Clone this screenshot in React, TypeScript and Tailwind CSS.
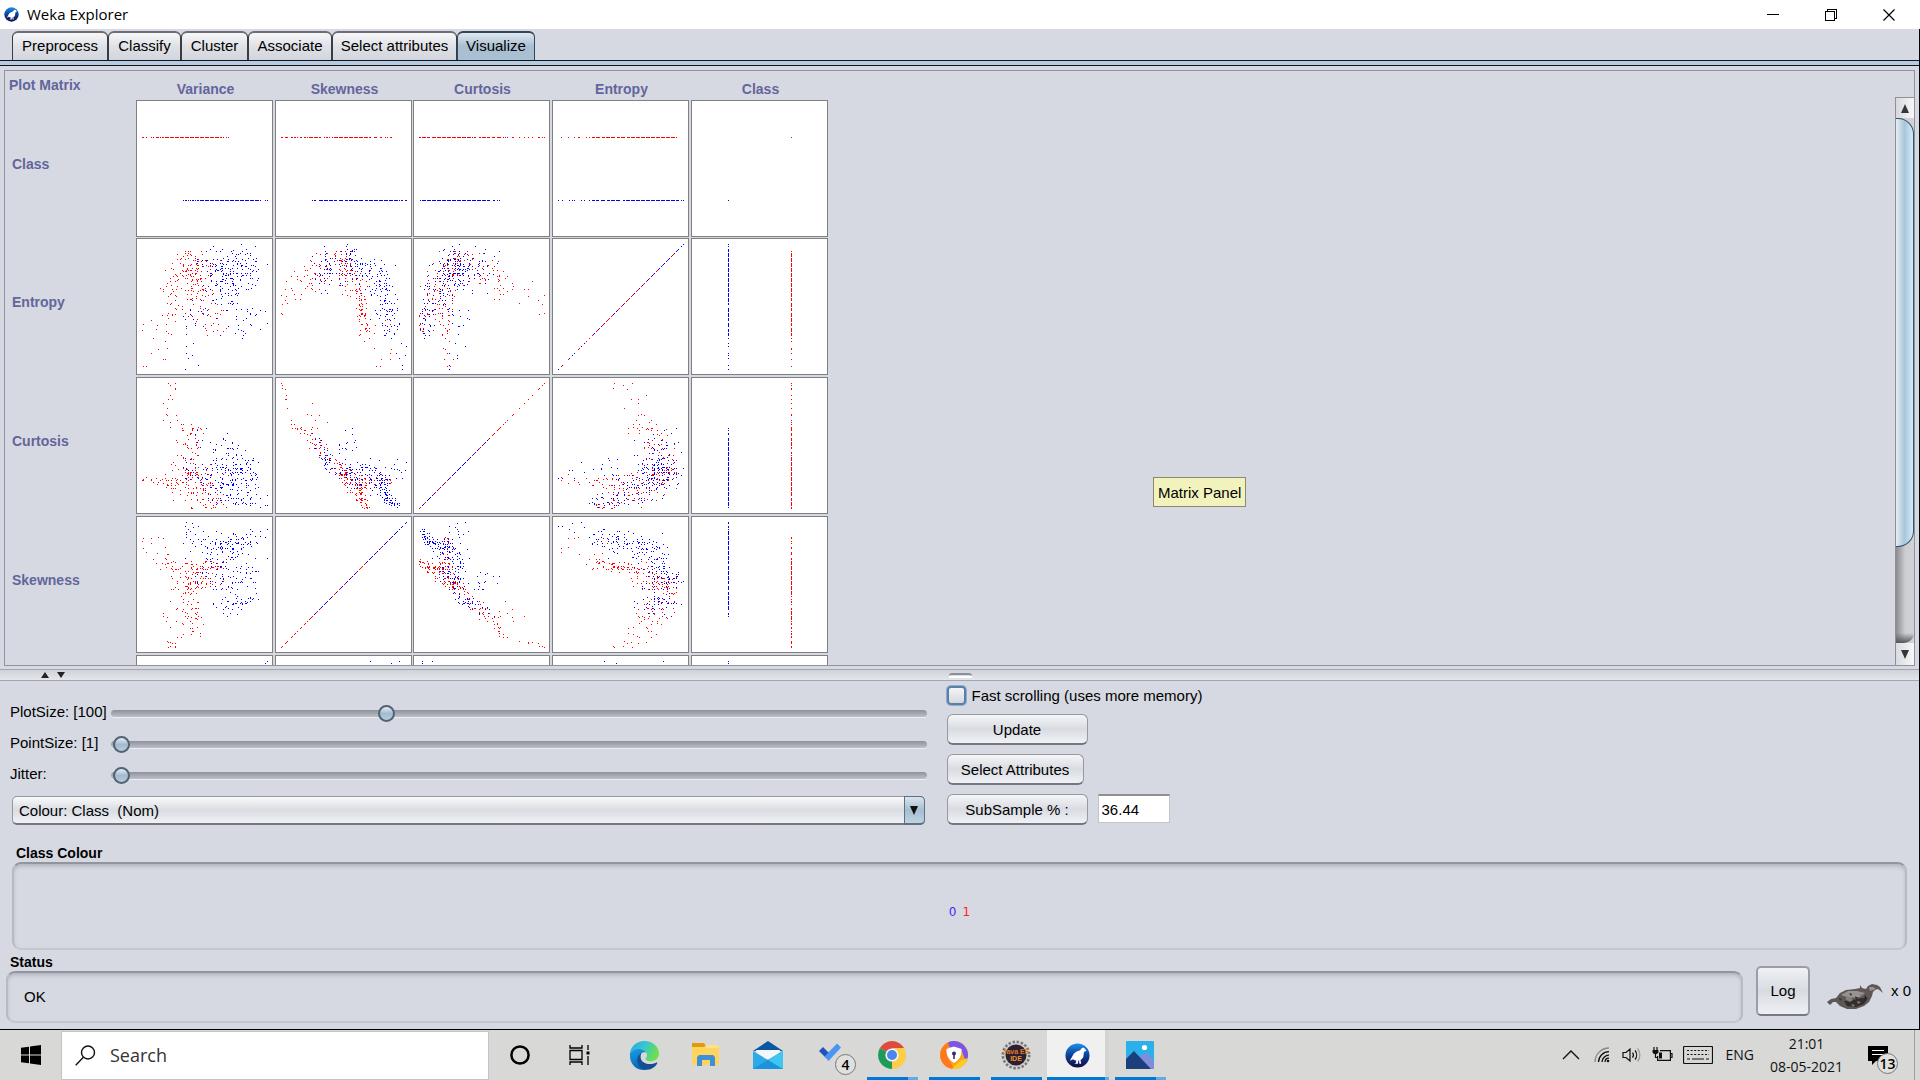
import React from "react";

/* ---------- sample data for the plot matrix ---------- */

type Point = { Variance: number; Skewness: number; Curtosis: number; Entropy: number; cls: 0 | 1 };
type Axis = "Variance" | "Skewness" | "Curtosis" | "Entropy" | "Class";

// variance, skewness, curtosis, entropy, count, spread of variance, skewness, curtosis, entropy
type Cluster = [number, number, number, number, number, number, number, number, number];

const RED: Cluster[] = [
  [0.24, 0.02, 0.94, 0.48, 4, 0.03, 0.02, 0.05, 0.06],
  [0.23, 0.05, 0.82, 0.62, 3, 0.03, 0.02, 0.04, 0.06],
  [0.2, 0.3, 0.72, 0.66, 6, 0.05, 0.05, 0.04, 0.06],
  [0.34, 0.15, 0.63, 0.68, 16, 0.05, 0.04, 0.03, 0.07],
  [0.38, 0.26, 0.56, 0.78, 18, 0.06, 0.04, 0.06, 0.06],
  [0.4, 0.3, 0.48, 0.84, 14, 0.05, 0.04, 0.04, 0.07],
  [0.35, 0.47, 0.32, 0.84, 22, 0.06, 0.05, 0.04, 0.07],
  [0.42, 0.5, 0.27, 0.83, 20, 0.07, 0.04, 0.05, 0.07],
  [0.5, 0.52, 0.24, 0.8, 18, 0.08, 0.03, 0.06, 0.07],
  [0.36, 0.57, 0.2, 0.7, 18, 0.1, 0.04, 0.05, 0.08],
  [0.46, 0.6, 0.15, 0.66, 16, 0.09, 0.03, 0.05, 0.07],
  [0.4, 0.63, 0.2, 0.54, 15, 0.1, 0.02, 0.06, 0.08],
  [0.5, 0.63, 0.1, 0.5, 16, 0.07, 0.02, 0.04, 0.07],
  [0.56, 0.65, 0.07, 0.38, 13, 0.07, 0.015, 0.05, 0.04],
  [0.6, 0.69, 0.01, 0.33, 7, 0.06, 0.01, 0.01, 0.02],
  [0.25, 0.65, 0.22, 0.4, 14, 0.05, 0.03, 0.03, 0.1],
  [0.19, 0.71, 0.22, 0.24, 7, 0.04, 0.03, 0.02, 0.07],
  [0.09, 0.8, 0.23, 0.25, 8, 0.04, 0.05, 0.02, 0.17],
];

const BLUE: Cluster[] = [
  [0.66, 0.28, 0.56, 0.72, 5, 0.04, 0.02, 0.02, 0.08],
  [0.68, 0.35, 0.42, 0.76, 14, 0.08, 0.03, 0.05, 0.07],
  [0.77, 0.38, 0.36, 0.8, 20, 0.08, 0.04, 0.05, 0.07],
  [0.82, 0.41, 0.32, 0.84, 12, 0.04, 0.04, 0.04, 0.07],
  [0.66, 0.51, 0.45, 0.8, 12, 0.05, 0.03, 0.05, 0.05],
  [0.48, 0.56, 0.55, 0.85, 7, 0.07, 0.04, 0.04, 0.07],
  [0.77, 0.54, 0.27, 0.93, 13, 0.06, 0.03, 0.05, 0.05],
  [0.66, 0.56, 0.28, 0.82, 18, 0.1, 0.05, 0.06, 0.07],
  [0.85, 0.61, 0.22, 0.81, 16, 0.07, 0.04, 0.06, 0.07],
  [0.6, 0.66, 0.3, 0.77, 14, 0.08, 0.04, 0.05, 0.05],
  [0.62, 0.74, 0.25, 0.75, 20, 0.09, 0.05, 0.05, 0.05],
  [0.68, 0.79, 0.22, 0.71, 18, 0.09, 0.04, 0.06, 0.06],
  [0.6, 0.83, 0.15, 0.64, 18, 0.08, 0.04, 0.05, 0.06],
  [0.78, 0.79, 0.13, 0.68, 17, 0.08, 0.05, 0.05, 0.06],
  [0.5, 0.82, 0.24, 0.47, 14, 0.07, 0.05, 0.06, 0.08],
  [0.62, 0.81, 0.16, 0.52, 10, 0.06, 0.04, 0.05, 0.06],
  [0.79, 0.88, 0.05, 0.37, 24, 0.07, 0.03, 0.03, 0.06],
  [0.9, 0.9, 0.05, 0.4, 7, 0.04, 0.03, 0.03, 0.05],
  [0.4, 0.93, 0.3, 0.25, 9, 0.06, 0.05, 0.04, 0.12],
];

function makeRandom(seed: number) {
  let state = seed;
  return () => {
    state = (state * 1664525 + 1013904223) >>> 0;
    return state / 4294967296;
  };
}

// reflects values that leave the unit range back into it
const fold = (n: number) => {
  const m = Math.abs(n);
  return m > 1 ? 2 - m : m;
};

function buildPoints(): Point[] {
  const random = makeRandom(2021);
  const noise = () => (random() + random() + random() + random() - 2) * 1.9;
  const points: Point[] = [];
  const add = (clusters: Cluster[], cls: 0 | 1) => {
    for (const [v, s, c, e, count, dv, ds, dc, de] of clusters) {
      for (let i = 0; i < count; i++) {
        const k = noise();
        points.push({
          Variance: fold(v + noise() * dv),
          Skewness: fold(s + k * ds),
          Curtosis: fold(c + (noise() * 0.75 - k * 0.65) * dc),
          Entropy: fold(Math.min(e + noise() * de, 0.94 + noise() * 0.03)),
          cls,
        });
      }
    }
  };
  add(RED, 1);
  add(BLUE, 0);
  for (let i = points.length - 1; i > 0; i--) {
    const j = Math.floor(random() * (i + 1));
    [points[i], points[j]] = [points[j], points[i]];
  }
  points.push(
    { Variance: 1, Skewness: 0.71, Curtosis: 0.1, Entropy: 0.84, cls: 0 },
    { Variance: 0.98, Skewness: 0.88, Curtosis: 0.02, Entropy: 0.46, cls: 0 },
    { Variance: 0.35, Skewness: 1, Curtosis: 0.37, Entropy: 0.18, cls: 0 },
    { Variance: 0.34, Skewness: 0.97, Curtosis: 0.24, Entropy: 0, cls: 0 },
    { Variance: 0.45, Skewness: 0.97, Curtosis: 0.24, Entropy: 0.03, cls: 0 },
    { Variance: 0.79, Skewness: 0.53, Curtosis: 0.32, Entropy: 1, cls: 0 },
    { Variance: 0, Skewness: 0.85, Curtosis: 0.22, Entropy: 0.31, cls: 1 },
    { Variance: 0.03, Skewness: 0.76, Curtosis: 0.25, Entropy: 0.02, cls: 1 },
    { Variance: 0.26, Skewness: 0, Curtosis: 1, Entropy: 0.59, cls: 1 },
    { Variance: 0.22, Skewness: 0.04, Curtosis: 0.9, Entropy: 0.7, cls: 1 },
  );
  return points;
}

const POINTS = buildPoints();
const COLUMNS: Axis[] = ["Variance", "Skewness", "Curtosis", "Entropy", "Class"];
const ROWS: Axis[] = ["Class", "Entropy", "Curtosis", "Skewness", "Variance"];

// values fall on a 100 step grid that the display enlarges to 125 pixels
function position(p: Point, axis: Axis) {
  if (axis === "Class") return p.cls ? 94 : 31;
  return Math.round(Math.round(p[axis] * 100) * 1.25);
}

function Plot({ x, y }: { x: Axis; y: Axis }) {
  const pixels = new Map<string, 0 | 1>();
  for (const p of POINTS) pixels.set(`${6 + position(p, x)} ${131 - position(p, y)}`, p.cls);
  let red = "";
  let blue = "";
  pixels.forEach((cls, at) => {
    const d = `M${at}h1v1h-1z`;
    if (cls) red += d;
    else blue += d;
  });
  return (
    <svg
      width="137"
      height="137"
      viewBox="0 0 137 137"
      shapeRendering="crispEdges"
      role="img"
      aria-label={`${y} against ${x}`}
      className="block"
    >
      <rect width="137" height="137" fill="#808080" />
      <rect x="1" y="1" width="135" height="135" fill="#fff" />
      <path d={red} fill="#f00" />
      <path d={blue} fill="#00f" />
    </svg>
  );
}

/* ---------- Weka window ---------- */

function WekaLogo({ size }: { size: number }) {
  return (
    <svg width={size} height={size} viewBox="0 0 26 26" aria-hidden="true">
      <defs>
        <linearGradient id={`weka${size}`} x1="0" y1="0" x2="0" y2="1">
          <stop offset="0" stopColor="#1e90e8" />
          <stop offset="0.45" stopColor="#0b46a0" />
          <stop offset="1" stopColor="#120a45" />
        </linearGradient>
      </defs>
      <circle cx="13" cy="13" r="12.5" fill={`url(#weka${size})`} />
      <path
        d="M22.500 8l-2.300-2.600c-1.200-.9-2.800-.5-3.400.8-.3.700-.8 1.200-1.600 1.500-3.600.8-6.200 2.600-7.400 5.800L5 18.500l3.400-1.700c1 .9 2.200 1.400 3.400 1.500l-.5 2.200-1.500 1h3.600l.5-3.200h.8l.2 3.200h2l-.8-3.700c2.200-1.200 3.400-3.200 3.300-5.800-.1-1.200.2-2.200.9-3.200z"
        fill="#fff"
      />
    </svg>
  );
}

function TitleBar() {
  return (
    <header className="flex h-[29px] shrink-0 items-center bg-white pl-1">
      <WekaLogo size={15} />
      <h1 className="pb-0.5 pl-2 font-['Open_Sans',sans-serif] text-[15px] leading-5 text-black">Weka Explorer</h1>
      <div className="ml-auto flex">
        <button aria-label="Minimize" className="flex h-[29px] w-[58px] items-center justify-center">
          <svg width="12" height="12" viewBox="0 0 12 12" shapeRendering="crispEdges">
            <path d="M0 5.500h12" stroke="#000" />
          </svg>
        </button>
        <button aria-label="Restore" className="flex h-[29px] w-[58px] items-center justify-center">
          <svg width="12" height="12" viewBox="0 0 12 12" shapeRendering="crispEdges" fill="none" stroke="#000">
            <path d="M.5 2.500h9v9h-9zM2.500 2.500v-2h9v9h-2" />
          </svg>
        </button>
        <button aria-label="Close" className="flex h-[29px] w-[60px] items-center justify-center pr-0.5">
          <svg width="12" height="12" viewBox="0 0 12 12" stroke="#000" strokeWidth="1.200">
            <path d="M.5.5l11 11M11.500.5l-11 11" />
          </svg>
        </button>
      </div>
    </header>
  );
}

const TABS = [
  ["Preprocess", "w-[96px]"],
  ["Classify", "w-[73px]"],
  ["Cluster", "w-[67px]"],
  ["Associate", "w-[84px]"],
  ["Select attributes", "w-[125px]"],
  ["Visualize", "w-[78px]"],
];

function Tabs() {
  return (
    <div className="shrink-0 border-r border-black">
      <div role="tablist" className="flex h-[31px] items-end pl-3">
        {TABS.map(([name, width]) => {
          const active = name === "Visualize";
          return (
            <button
              key={name}
              role="tab"
              aria-selected={active}
              className={`${width} h-[29px] whitespace-nowrap rounded-t-[6px] border-x border-t-2 pb-0.5 text-center text-[15px] leading-5 ${
                active
                  ? "border-[#31485c] bg-gradient-to-b from-[#dfe8ef] via-[#a9bfd2] to-[#a9bfd2]"
                  : "border-x-[#3a3c44] border-t-[#6c6e74] bg-gradient-to-b from-[#f7f7f9] via-[#dfe1e6] to-[#d2d5dc]"
              }`}
            >
              {name}
            </button>
          );
        })}
      </div>
      <div className="h-[6px] border-y border-[#10151f] bg-[#b7cbe0]" />
    </div>
  );
}

function ScrollBar() {
  return (
    <div className="mt-[26px] flex w-[19px] shrink-0 flex-col border-l border-t border-[#8f9198] bg-[#cfd0d4]">
      <button aria-label="Scroll up" className="flex h-[20px] items-center justify-center bg-gradient-to-r from-[#d6d8dc] to-[#f8f8f9]">
        <svg width="8" height="9" viewBox="0 0 8 9">
          <path d="M4 0l4 9H0z" fill="#33363a" />
        </svg>
      </button>
      <div className="flex flex-1 flex-col bg-gradient-to-r from-[#8a8b8f] via-[#cccdd1] to-[#d2d3d7]">
        <div className="h-[429px] rounded-r-[16px] border border-l-0 border-[#37506a] bg-gradient-to-r from-[#e6edf2] via-[#a9c6da] to-[#d3ecfa]" />
        <div className="mt-auto h-[10px] rounded-br-[14px] bg-gradient-to-b from-transparent to-[#55565a]" />
      </div>
      <button aria-label="Scroll down" className="flex h-[22px] items-center justify-center bg-gradient-to-r from-[#d9dbdf] to-[#f8f8f9]">
        <svg width="8" height="9" viewBox="0 0 8 9">
          <path d="M4 9L0 0h8z" fill="#33363a" />
        </svg>
      </button>
    </div>
  );
}

function PlotMatrix() {
  return (
    <section className="relative mx-1 mt-1 flex min-h-0 flex-1 overflow-hidden border border-[#8f93a0] text-[14px] font-bold text-[#63659c]">
      <div className="min-h-0 flex-1 overflow-hidden">
        <div className="grid grid-cols-[131px_139px_138px_139px_139px_137px]">
          <h2 className="h-[29px] pl-1 pt-1 leading-5">Plot Matrix</h2>
          {COLUMNS.map((name) => (
            <div key={name} className="h-[29px] w-[139px] pt-2 text-center leading-5">
              {name}
            </div>
          ))}
          {ROWS.map((row, r) => (
            <React.Fragment key={row}>
              <div className="flex h-[128px] items-center pl-[7px] leading-5">{row === "Variance" ? null : row}</div>
              {COLUMNS.map((column) => (
                <div key={column} className={r === 0 ? "h-[138px]" : "h-[139px]"}>
                  <Plot x={column} y={row} />
                </div>
              ))}
            </React.Fragment>
          ))}
        </div>
      </div>
      <ScrollBar />
      <div
        role="tooltip"
        className="absolute left-[1148px] top-[406px] border border-[#8a8a70] bg-[#f2f2bd] px-1 pb-1 pt-[6px] text-[15px] font-normal leading-[18px] text-black"
      >
        Matrix Panel
      </div>
    </section>
  );
}

function Splitter() {
  return (
    <div className="mt-[3px] flex h-[12px] shrink-0 items-center border-y border-[#a3a6ae] bg-gradient-to-b from-[#cfd2d9] via-[#d9dce2] to-[#e4e6ea]">
      <button aria-label="Collapse up" className="ml-[41px] w-2">
        <svg width="8" height="6" viewBox="0 0 8 6" className="block">
          <path d="M4 0l4 6H0z" fill="#222" />
        </svg>
      </button>
      <button aria-label="Collapse down" className="ml-2 w-2">
        <svg width="8" height="6" viewBox="0 0 8 6" className="block">
          <path d="M4 6L0 0h8z" fill="#222" />
        </svg>
      </button>
      <div className="ml-auto mr-auto flex w-full justify-center pr-[64px]">
        <div className="h-[5px] w-[23px] rounded-t-[3px] border-b-2 border-t-2 border-b-white border-t-[#8d9099]" />
      </div>
    </div>
  );
}

function Slider({ label, id, value }: { label: string; id: string; value: number }) {
  return (
    <div className="flex h-[31px] items-center">
      <label htmlFor={id} className="w-[101px] whitespace-nowrap pb-1 leading-5">
        {label}
      </label>
      <input
        id={id}
        type="range"
        min={0}
        max={1000}
        defaultValue={value}
        className="h-[17px] min-w-0 flex-1 appearance-none bg-transparent [&::-webkit-slider-runnable-track]:h-[7px] [&::-webkit-slider-runnable-track]:rounded-full [&::-webkit-slider-runnable-track]:bg-gradient-to-b [&::-webkit-slider-runnable-track]:from-[#8e9199] [&::-webkit-slider-runnable-track]:to-[#bcc0c9] [&::-webkit-slider-runnable-track]:shadow-[0_1px_0_#eceef2] [&::-webkit-slider-thumb]:-mt-[5px] [&::-webkit-slider-thumb]:size-[17px] [&::-webkit-slider-thumb]:appearance-none [&::-webkit-slider-thumb]:rounded-full [&::-webkit-slider-thumb]:border-2 [&::-webkit-slider-thumb]:border-[#4f6375] [&::-webkit-slider-thumb]:bg-gradient-to-b [&::-webkit-slider-thumb]:from-[#e6edf3] [&::-webkit-slider-thumb]:via-[#a3bbcf] [&::-webkit-slider-thumb]:to-[#b5cbdc]"
      />
    </div>
  );
}

function PushButton({ children, width }: { children: React.ReactNode; width: string }) {
  return (
    <button
      className={`${width} h-[31px] rounded-[6px] border border-b-2 border-[#96999f] border-b-[#74777e] bg-gradient-to-b from-[#f5f6f8] via-[#d8dbe1] to-[#f0f2f6] pt-px text-center leading-5`}
    >
      {children}
    </button>
  );
}

function Controls() {
  return (
    <section className="grid shrink-0 grid-cols-[73fr_75fr] pt-[5px]">
      <div className="pl-[10px] pr-5 pt-3">
        <Slider id="plot-size" label="PlotSize: [100]" value={334} />
        <Slider id="point-size" label="PointSize: [1]" value={3} />
        <Slider id="jitter" label="Jitter:" value={3} />
        <div className="relative mx-0.5 mt-[5px]">
          <select
            aria-label="Colour"
            className="block h-[29px] w-full appearance-none rounded-[5px] border border-b-2 border-[#96999f] border-b-[#74777e] bg-gradient-to-b from-[#fafafb] via-[#d9dce2] to-[#f0f2f6] pl-[6px] pt-px leading-5"
          >
            <option>Colour: Class{"\u00a0\u00a0"}(Nom)</option>
          </select>
          <span className="pointer-events-none absolute inset-y-0 right-0 flex w-[21px] items-center justify-center rounded-r-[5px] border border-b-2 border-[#5a7186] bg-gradient-to-b from-[#dbe5ed] via-[#a6bdd0] to-[#bfd3e2]">
            <svg width="8" height="9" viewBox="0 0 8 9">
              <path d="M4 9L0 0h8z" fill="#111" />
            </svg>
          </span>
        </div>
      </div>
      <div className="flex flex-col items-start">
        <div className="flex h-[19px] items-center">
          <input
            id="fast"
            type="checkbox"
            className="size-[19px] appearance-none rounded-[4px] border-2 border-[#5d7fa5] bg-gradient-to-b from-[#f4f5f7] to-[#d5d8de] shadow-[0_0_0_1px_#86b0da]"
          />
          <label htmlFor="fast" className="pl-[6px] leading-5">
            Fast scrolling (uses more memory)
          </label>
        </div>
        <div className="mt-[9px] flex flex-col items-start gap-[9px]">
          <PushButton width="w-[141px]">Update</PushButton>
          <PushButton width="w-[137px]">Select Attributes</PushButton>
          <div className="flex gap-[10px]">
            <PushButton width="w-[141px]">SubSample % :</PushButton>
            <input
              aria-label="SubSample percentage"
              defaultValue="36.44"
              className="h-[29px] w-[72px] border border-t-2 border-[#c2c4ca] border-t-[#8e9096] bg-white pl-[3px] leading-5"
            />
          </div>
        </div>
      </div>
    </section>
  );
}

function Taskbird() {
  return (
    <svg width="56" height="28" viewBox="0 0 56 28" aria-hidden="true">
      <path
        d="M0 18l4-3 5-1 4-5 6-3 9-1 5-1 0-3 2 3 4 1 2-3 4-2 5 1 3 2 3 6-5-4-3 1-2 2-1 4-3 6-5 4-8 3-9 0-7-3-4-4-3 0-3 3z"
        fill="#5d5856"
      />
      <path d="M14 11l7-4 9 0 8 2-5 4-11 1zM42 3l4 0 3 2-6 2z" fill="#989290" />
      <path d="M17 17l9-1 8-2 7 0-4 6-8 3-9-1zM12 14l3 1-2 2z" fill="#332e2e" />
      <path d="M19 12l4 1 3 3-3 2-4-2zM30 17l4 1-3 2zM24 20l4 1-2 2zM33 9l3 2-3 2z" fill="#857e7b" />
      <path d="M22 9l3 1-1 2zM28 12l3 2-2 1zM38 11l2 3-3 2z" fill="#2b2626" />
    </svg>
  );
}

const INSET =
  "rounded-[9px] border-2 border-[#b7bac1] border-t-[#92959c] border-b-[#c4c7cd] shadow-[inset_0_3px_4px_-1px_#aeb1b8]";

function ClassColour() {
  return (
    <section className="shrink-0 px-3 pt-[19px]">
      <h2 className="pl-1 text-[14px] font-bold leading-[18px]">Class Colour</h2>
      <div
        className={`flex h-[88px] items-center justify-center gap-[6px] pt-3 font-['DejaVu_Sans',sans-serif] text-[12px] leading-4 ${INSET}`}
      >
        <button className="text-[#3a2bff]">0</button>
        <button className="text-[#ff2020]">1</button>
      </div>
    </section>
  );
}

function Status() {
  return (
    <section className="flex shrink-0 pb-[6px] pl-[6px] pr-2 pt-[3px]">
      <div className="min-w-0 flex-1">
        <h2 className="pl-1 text-[14px] font-bold leading-[18px]">Status</h2>
        <output className={`flex h-[52px] items-center pl-4 leading-5 ${INSET}`}>OK</output>
      </div>
      <div className="flex items-center pl-[13px] pt-[5px]">
        <button className="h-[50px] w-[54px] rounded-[5px] border-2 border-[#9b9ea5] border-b-[#777a81] bg-gradient-to-b from-[#eff1f4] via-[#d8dbe1] to-[#eef0f5] leading-5">
          Log
        </button>
        <div className="pl-[17px] pt-[14px]">
          <Taskbird />
        </div>
        <span className="whitespace-nowrap pl-2 leading-5">x 0</span>
      </div>
    </section>
  );
}

/* ---------- taskbar icons ---------- */

function EdgeIcon() {
  return (
    <svg width="31" height="31" viewBox="0 0 32 32">
      <defs>
        <linearGradient id="edgeTop" x1="0" y1="0" x2="1" y2="0.4">
          <stop offset="0" stopColor="#27a4e8" />
          <stop offset="0.5" stopColor="#34c6d4" />
          <stop offset="1" stopColor="#6be04e" />
        </linearGradient>
        <linearGradient id="edgeLeft" x1="0" y1="0" x2="0.4" y2="1">
          <stop offset="0" stopColor="#1ba0e2" />
          <stop offset="1" stopColor="#0a63b8" />
        </linearGradient>
      </defs>
      <path d="M1 14C2 6 8 1 16 1c9 0 15 6.500 15 13 0 5-4 8-8.500 8-4 0-5.500-1.600-5.500-2.400 0-.8 1.600-1.400 1.600-4.100 0-3-3-5.700-6.600-5.700C7 9.800 3 11 1 14z" fill="url(#edgeTop)" />
      <path d="M1 14c2-3.500 6-5.200 10.500-4.700 2.500.3 5 1.700 6.300 3.700-3-1.500-7.800 1-7.800 7 0 6 4.500 10.500 9 10.700C8.500 33 0 25 1 14z" fill="url(#edgeLeft)" />
      <path d="M13 13.500c-4 2-5.600 7-3.600 11.500 1.600 3.700 5.500 6 9.600 5.700 4.500-.5 8-3 10-6.300.5-.9-.3-1.400-1-1-7 3.400-15.600.5-16-5.400-.1-1.900.4-3.400 1-4.500z" fill="#124f94" />
    </svg>
  );
}

function FolderIcon() {
  return (
    <svg width="28" height="26" viewBox="0 0 28 26">
      <path d="M0 1h12l2 3v6H0z" fill="#e09a0c" />
      <path d="M0 5h12l2-2h13v20H0z" fill="#ffd45e" />
      <path d="M14 3h13v3H14z" fill="#fbe08a" />
      <path d="M5 24v-9l2-2h14l2 2v9h-5v-6h-8v6z" fill="#3f8fd6" />
    </svg>
  );
}

function MailIcon() {
  return (
    <svg width="30" height="28" viewBox="0 0 30 28">
      <path d="M15 0l15 10H0z" fill="#0a56a0" />
      <path d="M3 9h24l-3 9H6z" fill="#f4f7fa" />
      <path d="M0 10l15 9 15-9v18H0z" fill="#2da9e8" />
      <path d="M30 10v18H0l15-9z" fill="#1b93da" />
      <path d="M30 10L15 19l15 9z" fill="#40c4f0" />
    </svg>
  );
}

function TodoIcon() {
  return (
    <span className="relative block h-[26px] w-[24px]">
      <svg width="24" height="20" viewBox="0 0 24 20">
        <path d="M1 9l4-4 7 7-4 4z" fill="#1d56b8" />
        <path d="M6.500 14.500L19 1.500l4 4L10.500 19z" fill="#4a94f2" />
      </svg>
      <Badge className="left-[17px] top-[12px]">4</Badge>
    </span>
  );
}

function Badge({ children, className }: { children: string; className: string }) {
  return (
    <span
      className={`absolute flex size-[21px] items-center justify-center rounded-full border border-[#777] bg-[#e0e0df] font-['Open_Sans',sans-serif] text-[14px] font-semibold leading-4 text-black ${className}`}
    >
      {children}
    </span>
  );
}

function ChromeIcon() {
  return (
    <svg width="28" height="28" viewBox="0 0 28 28">
      <path d="M14 14L1.900 7A14 14 0 0 1 26.100 7z" fill="#dd4b3e" />
      <path d="M14 14L26.100 7A14 14 0 0 1 14 28z" fill="#fccd45" />
      <path d="M14 14v14A14 14 0 0 1 1.900 7z" fill="#1e9c57" />
      <path d="M14 7h12.100A14 14 0 0 1 14 28l6-10.500z" fill="#fccd45" />
      <circle cx="14" cy="14" r="6.600" fill="#f3f3f3" />
      <circle cx="14" cy="14" r="5" fill="#4a86ee" />
    </svg>
  );
}

function SecureBrowserIcon() {
  return (
    <svg width="28" height="28" viewBox="0 0 28 28">
      <circle cx="14" cy="14" r="14" fill="#f9a61c" />
      <path d="M8 1.400A14 14 0 0 1 28 14c0 3-1 5-2 7L21 8 9 6z" fill="#7a55e8" />
      <path d="M14 28A14 14 0 0 1 8 1.400L9 18z" fill="#ff7a1e" />
      <path d="M27.500 17A14 14 0 0 1 12 28l8-8z" fill="#ffcb22" />
      <path d="M14 5.500l7.500 2.500c.4 7-2.500 11-7.500 14-5-3-7.900-7-7.500-14z" fill="#fff" />
      <circle cx="14" cy="12.500" r="2" fill="#3b2a67" />
      <path d="M13.200 12h1.600v6h-1.600z" fill="#3b2a67" />
    </svg>
  );
}

function JavaIcon() {
  return (
    <svg width="30" height="30" viewBox="0 0 30 30">
      <circle cx="15" cy="15" r="13" fill="none" stroke="#777" strokeWidth="3" strokeDasharray="2.400 1.700" />
      <circle cx="15" cy="15" r="12" fill="#c9c9c9" />
      <circle cx="15" cy="15" r="10.500" fill="#2b1f33" />
      <text x="15" y="14" textAnchor="middle" fontSize="7" fontWeight="700" fontFamily="Liberation Sans, sans-serif" fill="#e07b22">
        Java EE
      </text>
      <text x="15" y="21" textAnchor="middle" fontSize="7" fontWeight="700" fontFamily="Liberation Sans, sans-serif" fill="#e8902c">
        IDE
      </text>
    </svg>
  );
}

function PhotosIcon() {
  return (
    <svg width="28" height="28" viewBox="0 0 28 28">
      <rect width="28" height="28" rx="1" fill="#2bb0ea" />
      <path d="M14 16l6-5 8 9v8H14z" fill="#7f8ddb" />
      <path d="M0 18l8-8 17 18H0z" fill="#1b3f7d" />
      <circle cx="18.500" cy="6.500" r="2.600" fill="#fff" />
    </svg>
  );
}

function CortanaIcon() {
  return (
    <svg width="22" height="22" viewBox="0 0 22 22">
      <circle cx="11" cy="11" r="8.600" fill="none" stroke="#000" strokeWidth="2.500" />
    </svg>
  );
}

function TaskViewIcon() {
  return (
    <svg width="22" height="20" viewBox="0 0 22 20" fill="none" stroke="#000" strokeWidth="1.300" className="-ml-1">
      <path d="M1 5.500h12v9H1zM1 0v3h12V0M1 20v-3h12v3M19 0v5M19 11v9" />
      <path d="M17.500 6.500h3v3h-3z" fill="#000" stroke="none" />
    </svg>
  );
}

const APPS: { name: string; icon: React.ReactNode; bar: string }[] = [
  { name: "Cortana", icon: <CortanaIcon />, bar: "" },
  { name: "Task View", icon: <TaskViewIcon />, bar: "" },
  { name: "Edge", icon: <EdgeIcon />, bar: "" },
  { name: "File Explorer", icon: <FolderIcon />, bar: "" },
  { name: "Mail", icon: <MailIcon />, bar: "" },
  { name: "To Do", icon: <TodoIcon />, bar: "" },
  { name: "Chrome", icon: <ChromeIcon />, bar: "stack" },
  { name: "Secure Browser", icon: <SecureBrowserIcon />, bar: "single" },
  { name: "Eclipse", icon: <JavaIcon />, bar: "single" },
  { name: "Weka", icon: <WekaLogo size={25} />, bar: "active" },
  { name: "Photos", icon: <PhotosIcon />, bar: "stack" },
];

function AppButton({ name, icon, bar }: { name: string; icon: React.ReactNode; bar: string }) {
  const active = bar === "active";
  return (
    <button aria-label={name} className="flex h-[50px] w-[62px] flex-col items-center">
      <span className={`flex w-full flex-1 items-center justify-center pt-[3px] ${active ? "border-r-4 border-[#d2d3d3] bg-[#f0f0f0] pl-0.5" : ""}`}>
        {icon}
      </span>
      {bar && (
        <span className={`flex h-[3px] ${active ? "w-full" : "w-[51px]"}`}>
          <span className="flex-1 bg-[#0078d7]" />
          {bar !== "single" && <span className={`${active ? "w-1" : "w-[10px]"} bg-[#64abe3]`} />}
        </span>
      )}
      {!bar && <span className="h-[3px]" />}
    </button>
  );
}

function Tray() {
  return (
    <div className="ml-auto flex h-full items-center font-['Open_Sans',sans-serif] text-[14px] text-[#111]">
      <button aria-label="Show hidden icons">
        <svg width="18" height="10" viewBox="0 0 18 10" fill="none" stroke="#111" strokeWidth="1.400">
          <path d="M1 9l8-8 8 8" />
        </svg>
      </button>
      <svg width="16" height="16" viewBox="0 0 16 16" fill="none" stroke="#111" strokeWidth="1.300" className="ml-[14px]">
        <path d="M1 15A14 14 0 0 1 15 1" stroke="#888" />
        <path d="M4.500 15A10.500 10.500 0 0 1 15 4.700M8 15a7 7 0 0 1 7-6.800M11 15a4 4 0 0 1 4-3.800" />
        <circle cx="14" cy="14" r="1.300" fill="#111" stroke="none" />
      </svg>
      <svg width="20" height="16" viewBox="0 0 20 16" fill="none" stroke="#111" strokeWidth="1.200" className="ml-3">
        <path d="M1 5.500h3L8 2v12l-4-3.500H1zM10.500 5.500a4 4 0 0 1 0 5M13 3.500a7 7 0 0 1 0 9" />
        <path d="M15.500 1.500a10 10 0 0 1 0 13" stroke="#999" />
      </svg>
      <svg width="21" height="16" viewBox="0 0 21 16" fill="none" stroke="#111" strokeWidth="1.200" className="ml-[10px]">
        <path d="M8 3.600h10.400v9.800H5.600V9M18.500 6.500H20v4h-1.500M2 0v3M5 0v3M3.500 7v3.500h2" />
        <path d="M.5 3h6v2.500L5 7H2L.5 5.500zM7 5.500h3v6H7z" fill="#111" stroke="none" />
      </svg>
      <svg width="30" height="18" viewBox="0 0 30 18" fill="none" stroke="#111" className="ml-[10px]">
        <rect x=".5" y=".5" width="29" height="17" rx="1" strokeWidth="1.200" />
        <path d="M4 4.500h22M4 8.500h22" strokeDasharray="2 1.600" />
        <path d="M4 13h3M9 13h12M23 13h3" />
      </svg>
      <span className="ml-[13px] leading-5">ENG</span>
      <div className="ml-[14px] w-[77px] text-center leading-[23px]">
        <div>21:01</div>
        <div className="whitespace-nowrap">08-05-2021</div>
      </div>
      <button aria-label="Notifications, 13 new" className="relative ml-[23px] h-[22px] w-[30px]">
        <svg width="20" height="19" viewBox="0 0 20 19" className="block">
          <path d="M0 0h20v15H8l-4 4v-4H0z" fill="#000" />
          <path d="M4 4.500h12M4 8.500h12" stroke="#fff" strokeWidth="1.200" />
        </svg>
        <Badge className="left-[9px] top-[9px]">13</Badge>
      </button>
      <span className="ml-[16px] h-full w-[6px] border-l border-[#a0a0a0]" />
    </div>
  );
}

function Taskbar() {
  return (
    <footer className="flex h-[50px] shrink-0 items-center bg-[#d8d8d7]">
      <button aria-label="Start" className="flex h-full w-[61px] items-center justify-center">
        <svg width="20" height="20" viewBox="0 0 20 20">
          <path d="M0 2.800L8 1.700v7.800H0zM9 1.500L20 0v9.500H9zM0 10.500h8v7.800l-8-1.100zM9 10.500h11V20L9 18.500z" />
        </svg>
      </button>
      <label className="flex h-[49px] w-[428px] items-center border border-[#c4c4c4] bg-white pl-[13px]">
        <svg width="21" height="21" viewBox="0 0 21 21" fill="none" stroke="#111" strokeWidth="1.400">
          <circle cx="13" cy="7.500" r="6.500" />
          <path d="M8.400 12.200L.7 20.200" />
        </svg>
        <input
          type="text"
          placeholder="Search"
          aria-label="Search"
          className="ml-[14px] min-w-0 flex-1 bg-transparent font-['Open_Sans',sans-serif] text-[18px] leading-6 placeholder:text-[#333]"
        />
      </label>
      {APPS.map((app) => (
        <AppButton key={app.name} {...app} />
      ))}
      <Tray />
    </footer>
  );
}

export default function App() {
  return (
    <div className="flex h-screen flex-col overflow-hidden bg-[#d6d9e1] font-['Liberation_Sans',Arial,sans-serif] text-[15px] text-black">
      <TitleBar />
      <Tabs />
      <main className="flex min-h-0 flex-1 flex-col border-b border-r border-black">
        <PlotMatrix />
        <Splitter />
        <Controls />
        <ClassColour />
        <Status />
      </main>
      <Taskbar />
    </div>
  );
}
